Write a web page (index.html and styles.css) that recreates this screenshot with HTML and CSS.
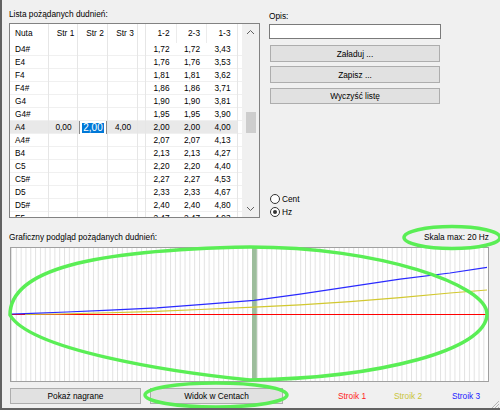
FILE: index.html
```html
<!DOCTYPE html>
<html lang="pl">
<head>
<meta charset="utf-8">
<title>Lista dudnień</title>
<link rel="stylesheet" href="styles.css">
</head>
<body>
<div class="window">
  <div class="top">
    <section class="list-panel">
      <div class="label">Lista pożądanych dudnień:</div>
      <div class="grid-box">
        <div class="grid">
          <div class="row head">
            <span class="c n">Nuta</span><span class="c s hd">Str 1</span><span class="c s hd">Str 2</span><span class="c s hd">Str 3</span><span class="c g"></span><span class="c v hd sh">1-2</span><span class="c v hd sh">2-3</span><span class="c v hd e">1-3</span><span class="c"></span>
          </div>
          <div class="row"><span class="c n">D4#</span><span class="c s"></span><span class="c s"></span><span class="c s"></span><span class="c g"></span><span class="c v">1,72</span><span class="c v">1,72</span><span class="c v e">3,43</span><span class="c"></span></div>
          <div class="row"><span class="c n">E4</span><span class="c s"></span><span class="c s"></span><span class="c s"></span><span class="c g"></span><span class="c v">1,76</span><span class="c v">1,76</span><span class="c v e">3,53</span><span class="c"></span></div>
          <div class="row"><span class="c n">F4</span><span class="c s"></span><span class="c s"></span><span class="c s"></span><span class="c g"></span><span class="c v">1,81</span><span class="c v">1,81</span><span class="c v e">3,62</span><span class="c"></span></div>
          <div class="row"><span class="c n">F4#</span><span class="c s"></span><span class="c s"></span><span class="c s"></span><span class="c g"></span><span class="c v">1,86</span><span class="c v">1,86</span><span class="c v e">3,71</span><span class="c"></span></div>
          <div class="row"><span class="c n">G4</span><span class="c s"></span><span class="c s"></span><span class="c s"></span><span class="c g"></span><span class="c v">1,90</span><span class="c v">1,90</span><span class="c v e">3,81</span><span class="c"></span></div>
          <div class="row"><span class="c n">G4#</span><span class="c s"></span><span class="c s"></span><span class="c s"></span><span class="c g"></span><span class="c v">1,95</span><span class="c v">1,95</span><span class="c v e">3,90</span><span class="c"></span></div>
          <div class="row sel"><span class="c n">A4</span><span class="c s">0,00</span><span class="c s edit-cell"><span class="edit"><span class="selected">2,00</span></span></span><span class="c s">4,00</span><span class="c g"></span><span class="c v">2,00</span><span class="c v">2,00</span><span class="c v e">4,00</span><span class="c"></span></div>
          <div class="row"><span class="c n">A4#</span><span class="c s"></span><span class="c s"></span><span class="c s"></span><span class="c g"></span><span class="c v">2,07</span><span class="c v">2,07</span><span class="c v e">4,13</span><span class="c"></span></div>
          <div class="row"><span class="c n">B4</span><span class="c s"></span><span class="c s"></span><span class="c s"></span><span class="c g"></span><span class="c v">2,13</span><span class="c v">2,13</span><span class="c v e">4,27</span><span class="c"></span></div>
          <div class="row"><span class="c n">C5</span><span class="c s"></span><span class="c s"></span><span class="c s"></span><span class="c g"></span><span class="c v">2,20</span><span class="c v">2,20</span><span class="c v e">4,40</span><span class="c"></span></div>
          <div class="row"><span class="c n">C5#</span><span class="c s"></span><span class="c s"></span><span class="c s"></span><span class="c g"></span><span class="c v">2,27</span><span class="c v">2,27</span><span class="c v e">4,53</span><span class="c"></span></div>
          <div class="row"><span class="c n">D5</span><span class="c s"></span><span class="c s"></span><span class="c s"></span><span class="c g"></span><span class="c v">2,33</span><span class="c v">2,33</span><span class="c v e">4,67</span><span class="c"></span></div>
          <div class="row"><span class="c n">D5#</span><span class="c s"></span><span class="c s"></span><span class="c s"></span><span class="c g"></span><span class="c v">2,40</span><span class="c v">2,40</span><span class="c v e">4,80</span><span class="c"></span></div>
          <div class="row"><span class="c n">E5</span><span class="c s"></span><span class="c s"></span><span class="c s"></span><span class="c g"></span><span class="c v">2,47</span><span class="c v">2,47</span><span class="c v e">4,93</span><span class="c"></span></div>
        </div>
        <div class="vscroll">
          <svg class="arrow" width="17" height="17" viewBox="0 0 17 17"><polyline points="5,10 8.5,6.5 12,10" fill="none" stroke="#606060" stroke-width="1"/></svg>
          <div class="track"><div class="thumb"></div></div>
          <svg class="arrow" width="17" height="17" viewBox="0 0 17 17"><polyline points="5,7 8.5,10.5 12,7" fill="none" stroke="#606060" stroke-width="1"/></svg>
        </div>
      </div>
    </section>
    <section class="side">
      <div class="label">Opis:</div>
      <div class="textbox"></div>
      <button class="btn b1">Załaduj ...</button>
      <button class="btn b2">Zapisz ...</button>
      <button class="btn b3">Wyczyść listę</button>
      <div class="radios">
        <div class="radio"><span class="circle"></span><span>Cent</span></div>
        <div class="radio"><span class="circle on"></span><span>Hz</span></div>
      </div>
    </section>
  </div>

  <div class="graph-head">
    <span>Graficzny podgląd pożądanych dudnień:</span>
    <span>Skala max: 20 Hz</span>
  </div>

  <div class="graph">
    <svg width="477" height="133" viewBox="0 0 477 133">
      <defs>
        <pattern id="grid" width="4.82" height="133" patternUnits="userSpaceOnUse">
          <rect x="0" y="0" width="1" height="133" fill="#e2e2e2"/>
        </pattern>
      </defs>
      <rect x="0" y="0" width="477" height="133" fill="#fff"/>
      <rect x="0" y="0" width="477" height="133" fill="url(#grid)"/>
      <rect x="241" y="0" width="4.8" height="133" fill="#9dbd9c"/>
      <line x1="0" y1="66.5" x2="477" y2="66.5" stroke="#ff0000" stroke-width="1"/>
      <polyline fill="none" stroke="#d2c830" stroke-width="1.2" points="14,66.5 49,66 89,65 139,63.7 189,61.5 243,59.2 289,56.9 339,53.7 389,49.6 439,45 476,42"/>
      <polyline fill="none" stroke="#2a2aff" stroke-width="1.2" points="0,66 14,65.7 56,64 99,62.2 146,59.8 189,56.6 243,52.4 289,46.2 339,38.6 389,31.2 439,25 476,19.3"/>
    </svg>
  </div>

  <div class="bottom">
    <button class="btn wide1">Pokaż nagrane</button>
    <button class="btn wide2">Widok w Centach</button>
    <span class="legend s1">Stroik 1</span>
    <span class="legend s2">Stroik 2</span>
    <span class="legend s3">Stroik 3</span>
  </div>

  <svg class="grip" width="10" height="10" viewBox="0 0 10 10">
    <line x1="3" y1="10" x2="10" y2="3" stroke="#b4b4b4" stroke-width="1"/>
    <line x1="6" y1="10" x2="10" y2="6" stroke="#b4b4b4" stroke-width="1"/>
    <line x1="9" y1="10" x2="10" y2="9" stroke="#b4b4b4" stroke-width="1"/>
  </svg>

  <svg class="annot" width="500" height="410" viewBox="0 0 500 410">
    <g fill="none" stroke="#5aee55" stroke-width="3.5" stroke-linecap="round">
      <path d="M10,315 C10,270 90,250 250,247 C380,247 487,285 487,314 C487,350 380,378 250,380 C170,372 30,350 10,315 Z"/>
      <ellipse cx="452" cy="237.5" rx="48" ry="11"/>
      <ellipse cx="216" cy="395" rx="71" ry="12"/>
    </g>
  </svg>
</div>
</body>
</html>
```
FILE: styles.css
```css
html, body {
  margin: 0;
  padding: 0;
}

body {
  width: 500px;
  height: 410px;
  overflow: hidden;
  background: #f0f0f0;
}

.window {
  position: relative;
  box-sizing: border-box;
  width: 500px;
  height: 410px;
  border-left: 2px solid #626262;
  border-bottom: 2px solid #626262;
  background: #f0f0f0;
  font-family: "Liberation Sans", Arial, sans-serif;
  font-size: 8.3px;
  color: #000;
  overflow: hidden;
}

.top {
  display: flex;
  padding: 7px 0 0 7px;
  height: 218px;
  box-sizing: border-box;
}

.label {
  height: 14px;
  line-height: 14px;
  white-space: nowrap;
}

.list-panel {
  width: 251px;
  flex: none;
  display: flex;
  flex-direction: column;
}

.list-panel .label {
  margin-bottom: 2px;
}

.grid-box {
  display: flex;
  box-sizing: border-box;
  width: 251px;
  height: 195px;
  border: 1px solid #828282;
  background: #fff;
  overflow: hidden;
}

.grid {
  width: 232px;
  flex: none;
  overflow: hidden;
}

.row {
  display: grid;
  grid-template-columns: 39px 29px 30px 30px 8px 31px 30px 31px 4px;
  height: 13px;
  line-height: 13px;
  box-shadow: inset 0 -1px #f0f0f0;
  white-space: nowrap;
}

.row.head {
  height: 19px;
  line-height: 19px;
  box-shadow: none;
}

.c {
  display: block;
  overflow: hidden;
}

.n {
  padding-left: 5px;
  box-shadow: inset -1px 0 #e6e6e6;
}

.s,
.g,
.e {
  box-shadow: inset -1px 0 #e6e6e6;
}

.s,
.v {
  text-align: center;
}

.hd {
  padding-left: 4px;
}

.head .sh {
  box-shadow: inset -1px 0 #ececec;
}

.row.sel {
  background: linear-gradient(#e9e9e9, #e9e9e9) 0 0 / 228px 100% no-repeat;
}

.edit {
  display: flex;
  align-items: center;
  justify-content: center;
  box-sizing: border-box;
  height: 13px;
  margin: 0 1px;
  border-left: 1px solid #8a8a8a;
  border-right: 1px solid #8a8a8a;
  background: #fff;
}

.selected {
  display: block;
  background: #0078d7;
  color: #fff;
  font-size: 10px;
  line-height: 10px;
  padding: 0 1px;
}

.vscroll {
  width: 17px;
  flex: none;
  display: flex;
  flex-direction: column;
  background: #f0f0f0;
}

.arrow {
  display: block;
  flex: none;
}

.track {
  flex: 1;
}

.thumb {
  width: 10px;
  height: 21px;
  margin: 71px 0 0 4px;
  background: #cdcdcd;
}

.side {
  margin-left: 9px;
  width: 172px;
  flex: none;
  padding-top: 2px;
  display: flex;
  flex-direction: column;
}

.textbox {
  box-sizing: border-box;
  width: 172px;
  height: 15px;
  margin-top: 1px;
  border: 1px solid #7a7a7a;
  background: #fff;
}

.btn {
  display: block;
  flex: none;
  box-sizing: border-box;
  padding: 0;
  border: 1px solid #adadad;
  background: #e1e1e1;
  font-family: inherit;
  font-size: 8.3px;
  color: #000;
  text-align: center;
}

.side .btn {
  width: 170px;
  height: 17px;
  margin-left: 1px;
}

.b1 { margin-top: 6px; }
.b2 { margin-top: 4px; }
.side .b3 { margin-top: 5px; height: 16px; }

.radios {
  margin-top: auto;
  display: flex;
  flex-direction: column;
}

.radio {
  display: flex;
  align-items: center;
  height: 13px;
  padding-left: 1px;
}

.circle {
  box-sizing: border-box;
  width: 10px;
  height: 10px;
  margin-right: 2px;
  border: 1px solid #333;
  border-radius: 50%;
  background: #fff;
  display: flex;
  align-items: center;
  justify-content: center;
}

.circle.on::after {
  content: "";
  width: 4px;
  height: 4px;
  border-radius: 50%;
  background: #333;
}

.graph-head {
  display: flex;
  justify-content: space-between;
  height: 14px;
  line-height: 14px;
  margin-top: 12px;
  padding: 0 11px 0 7px;
}

.graph {
  box-sizing: border-box;
  width: 479px;
  height: 135px;
  margin: 3px 0 0 8px;
  border: 1px solid #a0a0a0;
  background: #fff;
}

.graph svg {
  display: block;
}

.bottom {
  display: flex;
  align-items: center;
  margin: 6px 0 0 8px;
  height: 16px;
}

.bottom .btn {
  height: 16px;
}

.wide1 { width: 131px; }
.wide2 { width: 133px; margin-left: 9px; }

.legend {
  flex: none;
  white-space: nowrap;
}

.s1 { margin-left: 55px; width: 56px; color: #ff1a1a; }
.s2 { width: 58px; color: #c9c43a; }
.s3 { width: 40px; color: #2020ff; }

.grip {
  position: absolute;
  right: 1px;
  bottom: 0;
}

.annot {
  position: absolute;
  left: -2px;
  top: 0;
  pointer-events: none;
}
```
